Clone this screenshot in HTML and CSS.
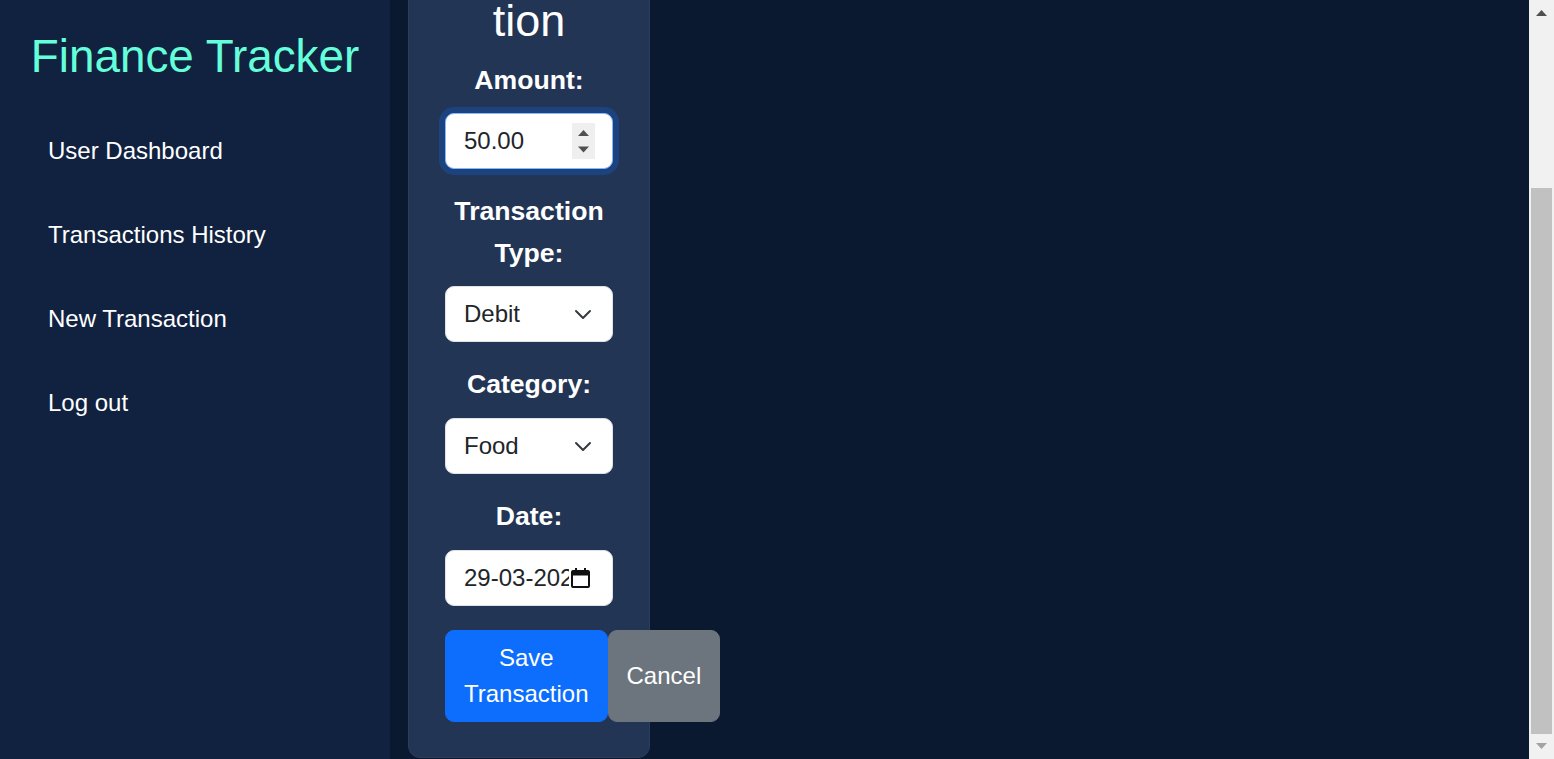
FILE: index.html
```html
<!DOCTYPE html>
<html lang="en">
<head>
<meta charset="utf-8">
<title>Finance Tracker - New Transaction</title>
<link rel="stylesheet" href="styles.css">
</head>
<body>
<div class="app">
  <aside class="sidebar">
    <h1 class="brand">Finance Tracker</h1>
    <nav>
      <ul class="nav-list">
        <li><a class="nav-link" href="#">User Dashboard</a></li>
        <li><a class="nav-link" href="#">Transactions History</a></li>
        <li><a class="nav-link" href="#">New Transaction</a></li>
        <li><a class="nav-link" href="#">Log out</a></li>
      </ul>
    </nav>
  </aside>
  <main class="main">
    <form class="card">
      <h2 class="card-title">New Transaction</h2>
      <div class="group">
        <label class="label" for="amount">Amount:</label>
        <div class="number-wrap">
          <input class="control focused number" id="amount" type="number" step="0.01" value="50.00">
          <svg class="spin" width="23" height="36" viewBox="0 0 23 36"><rect width="23" height="36" fill="#efefef"/><polygon points="6,13 17,13 11.5,7" fill="#505050"/><polygon points="6,23.5 17,23.5 11.5,29.5" fill="#505050"/></svg>
        </div>
      </div>
      <div class="group">
        <label class="label" for="type">Transaction Type:</label>
        <div class="select-wrap">
          <select class="control select" id="type">
            <option>Debit</option>
            <option>Credit</option>
          </select>
          <svg class="chevron" width="18" height="12" viewBox="0 0 18 12"><path d="M2 3l7 7 7-7" fill="none" stroke="#343a40" stroke-width="2" stroke-linecap="round" stroke-linejoin="round"/></svg>
        </div>
      </div>
      <div class="group">
        <label class="label" for="category">Category:</label>
        <div class="select-wrap">
          <select class="control select" id="category">
            <option>Food</option>
            <option>Rent</option>
            <option>Travel</option>
          </select>
          <svg class="chevron" width="18" height="12" viewBox="0 0 18 12"><path d="M2 3l7 7 7-7" fill="none" stroke="#343a40" stroke-width="2" stroke-linecap="round" stroke-linejoin="round"/></svg>
        </div>
      </div>
      <div class="group group-last">
        <label class="label" for="date">Date:</label>
        <div class="control date-field">
          <input class="date-text" id="date" type="text" value="29-03-2025">
          <svg class="cal" width="19" height="20" viewBox="0 0 19 20"><path fill-rule="evenodd" d="M2 2h15a2 2 0 0 1 2 2v14a2 2 0 0 1-2 2H2a2 2 0 0 1-2-2V4a2 2 0 0 1 2-2zM2 7.5v10.5h15V7.5z" fill="#111"/><path d="M4 0h2v3H4zM13 0h2v3h-2z" fill="#111"/></svg>
        </div>
      </div>
      <div class="actions">
        <button type="button" class="btn btn-primary">Save Transaction</button>
        <button type="button" class="btn btn-secondary">Cancel</button>
      </div>
    </form>
  </main>
  <div class="scrollbar" aria-hidden="true">
    <svg class="sb-arrow" width="25" height="20" viewBox="0 0 25 20"><polygon points="12.5,10 18,16 7,16" fill="#505050"/></svg>
    <div class="sb-track"><div class="sb-thumb"></div></div>
    <svg class="sb-arrow" width="25" height="20" viewBox="0 0 25 20"><polygon points="7,4 18,4 12.5,10" fill="#a3a3a3"/></svg>
  </div>
</div>
</body>
</html>
```
FILE: styles.css
```css
html, body {
  margin: 0;
  padding: 0;
  height: 100%;
  overflow: hidden;
}
body {
  background: #0a192f;
  font-family: "Liberation Sans", Arial, sans-serif;
  color: #fff;
}
.app {
  display: flex;
  height: 100vh;
}
.sidebar {
  flex: 0 0 390px;
  box-sizing: border-box;
  padding: 30px 24px;
  background: #112240;
}
.brand {
  margin: 0 0 37px;
  font-size: 45.8px;
  line-height: 54px;
  font-weight: 400;
  color: #64ffda;
  text-align: center;
}
.nav-list {
  list-style: none;
  margin: 0;
  padding: 0;
}
.nav-link {
  display: block;
  padding: 12px 24px;
  margin-bottom: 24px;
  font-size: 24px;
  line-height: 36px;
  color: #fff;
  text-decoration: none;
}
.main {
  flex: 1;
  min-width: 0;
  display: flex;
  flex-direction: column;
  justify-content: flex-end;
  align-items: flex-start;
  overflow: hidden;
  padding: 0 18px 1.5px;
}
.card {
  flex-shrink: 0;
  width: 242px;
  box-sizing: border-box;
  padding: 36px 36px 35px;
  background: #233554;
  border: 1px solid #2a3d5e;
  border-radius: 12px;
  text-align: center;
}
.card-title {
  margin: 0 0 12px;
  font-size: 45px;
  line-height: 54px;
  font-weight: 400;
  overflow-wrap: break-word;
}
.group {
  margin-bottom: 22px;
}
.group-last {
  margin-bottom: 24px;
}
.label {
  display: block;
  margin-bottom: 12px;
  font-size: 26.6px;
  line-height: 41.6px;
  font-weight: 700;
}
.control {
  display: block;
  width: 100%;
  box-sizing: border-box;
  height: 56px;
  padding: 9px 18px;
  font-family: "Liberation Sans", Arial, sans-serif;
  font-size: 24px;
  line-height: 36px;
  color: #212529;
  background: #fff;
  border: 1px solid #dee2e6;
  border-radius: 9px;
  text-align: left;
  outline: none;
}
.focused {
  border-color: #86b7fe;
  box-shadow: 0 0 0 6px rgba(13, 110, 253, 0.25);
}
.number {
  -moz-appearance: textfield;
  padding-right: 48px;
}
.number::-webkit-inner-spin-button,
.number::-webkit-outer-spin-button {
  -webkit-appearance: none;
  margin: 0;
}
.number-wrap {
  position: relative;
}
.spin {
  position: absolute;
  right: 18px;
  top: 10px;
  pointer-events: none;
}
.select-wrap {
  position: relative;
}
.select {
  appearance: none;
  -webkit-appearance: none;
  padding-right: 54px;
}
.chevron {
  position: absolute;
  right: 21px;
  top: 22px;
  pointer-events: none;
}
.date-field {
  display: flex;
  align-items: center;
}
.date-text {
  flex: 1;
  min-width: 0;
  padding: 0;
  border: 0;
  outline: none;
  background: transparent;
  font-family: "Liberation Sans", Arial, sans-serif;
  font-size: 24px;
  line-height: 36px;
  color: #212529;
}
.cal {
  flex: 0 0 auto;
  margin: 0 4px 0 2px;
}
.actions {
  display: flex;
}
.btn {
  padding: 9px 18px;
  font-family: "Liberation Sans", Arial, sans-serif;
  font-size: 24px;
  line-height: 36px;
  color: #fff;
  border-radius: 9px;
  cursor: pointer;
}
.btn-primary {
  background: #0d6efd;
  border: 1px solid #0d6efd;
}
.btn-secondary {
  background: #6c757d;
  border: 1px solid #6c757d;
}
.scrollbar {
  flex: 0 0 25px;
  display: flex;
  flex-direction: column;
  background: #f1f1f1;
}
.sb-arrow {
  display: block;
  flex: 0 0 auto;
}
.sb-track {
  flex: 1;
  padding: 167.7px 2px 0;
}
.sb-thumb {
  height: 546px;
  background: #c1c1c1;
}
```
